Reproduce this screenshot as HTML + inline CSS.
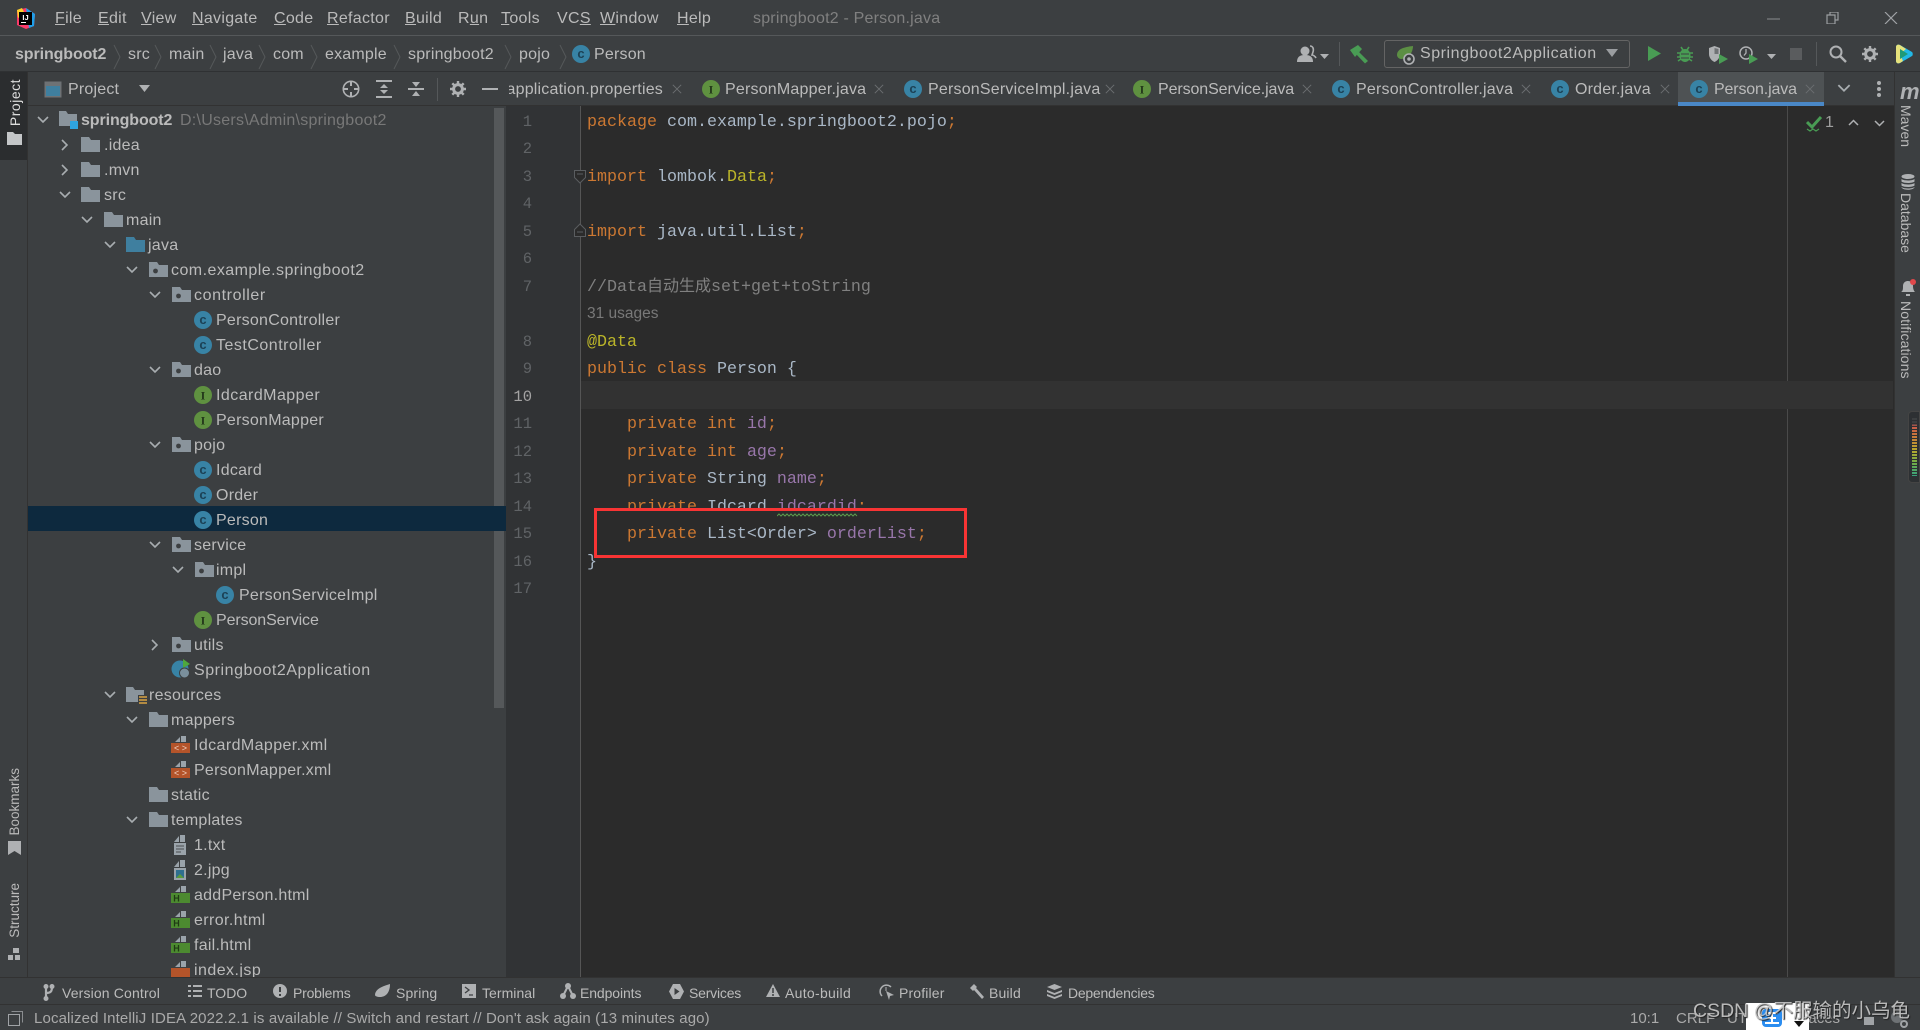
<!DOCTYPE html>
<html><head><meta charset="utf-8"><title>springboot2 - Person.java</title>
<style>
html,body{margin:0;padding:0;width:1920px;height:1030px;overflow:hidden;background:#3c3f41}
body{position:relative;font-family:"Liberation Sans","Noto Sans CJK SC",sans-serif;font-size:16px;color:#bbb}
div,svg,span.a{position:absolute}
.m{top:7px;line-height:24px;letter-spacing:.3px;white-space:nowrap;color:#bbb}
.n{top:43px;line-height:24px;letter-spacing:.2px;white-space:nowrap;color:#bbb}
.tb{top:78px;line-height:24px;letter-spacing:.2px;white-space:nowrap;color:#bbb}
.r{height:25px;line-height:27px;letter-spacing:.25px;white-space:nowrap;color:#bbb}
.g{position:absolute;width:40px;text-align:right;left:492px;height:27px;line-height:27px;font-family:"Liberation Mono",monospace;font-size:15.5px;color:#606366}
.c{position:absolute;left:587px;height:27px;line-height:27px;font-family:"Liberation Mono","Noto Sans CJK SC",monospace;font-size:16.67px;color:#a9b7c6;white-space:pre}
.k{color:#cc7832}.f{color:#9876aa}.y{color:#bbb529}
.bt{top:982px;line-height:22px;font-size:14px;letter-spacing:.15px;white-space:nowrap;color:#bbb}
.st{top:1007px;line-height:24px;font-size:15px;white-space:nowrap;color:#aaa}
.v{writing-mode:vertical-rl;white-space:nowrap;font-size:14px;line-height:20px;color:#bbb}
.vl{transform:rotate(180deg)}
</style></head><body>
<svg width="0" height="0" style="left:0;top:0">
<defs>
<symbol id="fd" viewBox="0 0 19 17"><path d="M0 1h8l2 3h9v12H0z" fill="#8a949c"/></symbol>
<symbol id="pk" viewBox="0 0 19 17"><path d="M0 1h8l2 3h9v12H0z" fill="#8a949c"/><circle cx="6.500" cy="10" r="2.400" fill="#3c3f41"/></symbol>
<symbol id="bf" viewBox="0 0 19 17"><path d="M0 1h8l2 3h9v12H0z" fill="#3f7f9f"/></symbol>
<symbol id="cc" viewBox="0 0 18 18"><circle cx="9" cy="9" r="9" fill="#3883a5"/><text x="9" y="13" font-family="Liberation Sans" font-size="13" font-weight="bold" text-anchor="middle" fill="#1c4256">c</text></symbol>
<symbol id="ii" viewBox="0 0 18 18"><circle cx="9" cy="9" r="9" fill="#5f9140"/><text x="9" y="13.500" font-family="Liberation Serif" font-size="12" font-weight="bold" text-anchor="middle" fill="#23381a">I</text></symbol>
<symbol id="xml" viewBox="0 0 19 18"><path d="M4 7l5-5v5zM10 1h5v6h-5z" fill="#9aa3aa"/><rect y="8" width="19" height="10" fill="#b4542a"/><text x="9.500" y="16" font-family="Liberation Sans" font-size="9" text-anchor="middle" fill="#f0d0c0">&lt; &gt;</text></symbol>
<symbol id="htm" viewBox="0 0 19 18"><path d="M4 7l5-5v5zM10 1h5v6h-5z" fill="#9aa3aa"/><rect y="8" width="19" height="10" fill="#4c8a30"/><text x="5.500" y="16.500" font-family="Liberation Sans" font-size="9" font-weight="bold" text-anchor="middle" fill="#1f3a14">H</text></symbol>
<symbol id="jsp" viewBox="0 0 19 18"><path d="M4 7l5-5v5zM10 1h5v6h-5z" fill="#9aa3aa"/><rect y="8" width="19" height="10" fill="#b4542a"/></symbol>
<symbol id="txt" viewBox="0 0 19 20"><path d="M2 7l5-6v6zM8 0h5v7H8zM2 8h12v12H2z" fill="#9aa3aa"/><path d="M4 11h8M4 14h8M4 17h5" stroke="#4a4d50" stroke-width="1"/></symbol>
<symbol id="jpg" viewBox="0 0 19 20"><path d="M2 7l5-6v6zM8 0h5v7H8zM2 8h12v12H2z" fill="#9aa3aa"/><rect x="4" y="10" width="8" height="8" fill="#2f6f8f"/><path d="M4 18l4-4 4 4z" fill="#5c9a3c"/></symbol>
<symbol id="dn" viewBox="0 0 12 8"><path d="M1 1l5 5 5-5" fill="none" stroke="#a8adb0" stroke-width="1.600"/></symbol>
<symbol id="rt" viewBox="0 0 8 12"><path d="M1 1l5 5-5 5" fill="none" stroke="#a8adb0" stroke-width="1.600"/></symbol>
<symbol id="sp" viewBox="0 0 8 26"><path d="M1 1l6 12-6 12" fill="none" stroke="#55585a" stroke-width="1"/></symbol>
<symbol id="xx" viewBox="0 0 12 12"><path d="M1 1l10 10M11 1L1 11" stroke="#6a6d70" stroke-width="1.200"/></symbol>
<symbol id="gear" viewBox="0 0 16 16"><circle cx="8" cy="8" r="4.400" fill="none" stroke="#afb1b3" stroke-width="3"/><path d="M8 0v3M8 13v3M0 8h3M13 8h3M2.300 2.300l2.200 2.200M11.500 11.500l2.200 2.200M13.700 2.300l-2.200 2.200M4.500 11.500l-2.200 2.200" stroke="#afb1b3" stroke-width="2.400"/></symbol>
</defs></svg>

<!-- menu bar -->
<div style="left:0;top:35px;width:1920px;height:1px;background:#55585a"></div>
<svg style="left:15px;top:8px" width="21" height="21" viewBox="0 0 21 21"><path d="M2 2l9-2 9 6-1 12-8 3-9-4z" fill="#fc3a6a"/><path d="M11 0l9 6-1 12-5 2z" fill="#1f9fe8"/><path d="M2 2l5-2 3 6-7 4z" fill="#fcd02a"/><rect x="4" y="4" width="13" height="13" fill="#000"/><text x="10.500" y="12" font-family="Liberation Sans" font-size="7.500" font-weight="bold" text-anchor="middle" fill="#fff">IJ</text><rect x="6" y="14" width="5" height="1" fill="#fff"/></svg>
<div class="m" style="left:55px"><u>F</u>ile</div>
<div class="m" style="left:98px"><u>E</u>dit</div>
<div class="m" style="left:141px"><u>V</u>iew</div>
<div class="m" style="left:192px"><u>N</u>avigate</div>
<div class="m" style="left:274px"><u>C</u>ode</div>
<div class="m" style="left:327px"><u>R</u>efactor</div>
<div class="m" style="left:405px"><u>B</u>uild</div>
<div class="m" style="left:458px">R<u>u</u>n</div>
<div class="m" style="left:501px"><u>T</u>ools</div>
<div class="m" style="left:557px">VC<u>S</u></div>
<div class="m" style="left:600px"><u>W</u>indow</div>
<div class="m" style="left:677px"><u>H</u>elp</div>
<div class="m" style="left:753px;color:#808080;letter-spacing:.2px">springboot2 - Person.java</div>
<svg style="left:1767px;top:12px" width="140" height="12" viewBox="0 0 140 12"><path d="M0 7h13" stroke="#8a8d90"/><path d="M60 3h8v9h-8zM63 3V0h8v8h-3" fill="none" stroke="#9a9da0" stroke-width="1.200"/><path d="M118 0l12 12M130 0l-12 12" stroke="#a0a3a6" stroke-width="1.200"/></svg>

<!-- nav bar -->
<div style="left:0;top:71px;width:1920px;height:1px;background:#2f3133"></div>
<div class="n" style="left:15px;font-weight:bold;letter-spacing:-.1px">springboot2</div>
<svg style="left:113px;top:44px" width="8" height="26"><use href="#sp"/></svg>
<div class="n" style="left:128px">src</div>
<svg style="left:154px;top:44px" width="8" height="26"><use href="#sp"/></svg>
<div class="n" style="left:169px">main</div>
<svg style="left:209px;top:44px" width="8" height="26"><use href="#sp"/></svg>
<div class="n" style="left:223px">java</div>
<svg style="left:258px;top:44px" width="8" height="26"><use href="#sp"/></svg>
<div class="n" style="left:273px">com</div>
<svg style="left:310px;top:44px" width="8" height="26"><use href="#sp"/></svg>
<div class="n" style="left:325px">example</div>
<svg style="left:393px;top:44px" width="8" height="26"><use href="#sp"/></svg>
<div class="n" style="left:408px">springboot2</div>
<svg style="left:504px;top:44px" width="8" height="26"><use href="#sp"/></svg>
<div class="n" style="left:519px">pojo</div>
<svg style="left:559px;top:44px" width="8" height="26"><use href="#sp"/></svg>
<svg style="left:572px;top:45px" width="18" height="18"><use href="#cc"/></svg>
<div class="n" style="left:594px">Person</div>

<!-- toolbar right -->
<svg style="left:1297px;top:45px" width="40" height="18" viewBox="0 0 40 18"><circle cx="8" cy="6" r="4.500" fill="#afb1b3"/><path d="M0 17c0-6 4-7 8-7s8 1 8 7z" fill="#afb1b3"/><path d="M13 1c3 0 4 3 3 6l-1 3c1 0 3 1 4 3" fill="none" stroke="#afb1b3" stroke-width="1.600"/><path d="M23 9h9l-4.500 5z" fill="#afb1b3"/></svg>
<div style="left:1339px;top:42px;width:1px;height:24px;background:#55585a"></div>
<svg style="left:1349px;top:44px" width="20" height="20" viewBox="0 0 20 20"><path d="M1 6l8-5 4 4-7 8z" fill="#499c54"/><path d="M9 7l10 10-3 2.500L7 10z" fill="#499c54"/></svg>
<div style="left:1384px;top:40px;width:244px;height:26px;border:1px solid #646464;border-radius:3px"></div>
<svg style="left:1396px;top:45px" width="20" height="20" viewBox="0 0 20 20"><path d="M1 10C1 4 8 2 17 1c0 6-4 13-12 13-2 0-4-2-4-4z" fill="#5c8f44"/><circle cx="13" cy="14" r="5" fill="#3c3f41" stroke="#afb1b3" stroke-width="1.600"/><circle cx="13" cy="14" r="1.800" fill="#afb1b3"/></svg>
<div class="n" style="left:1420px;top:42px;letter-spacing:.55px">Springboot2Application</div>
<svg style="left:1606px;top:49px" width="12" height="9"><path d="M0 0h12l-6 8z" fill="#9a9da0"/></svg>
<svg style="left:1648px;top:46px" width="13" height="15"><path d="M0 0l13 7.500L0 15z" fill="#499c54"/></svg>
<svg style="left:1677px;top:46px" width="16" height="16" viewBox="0 0 16 16"><ellipse cx="8" cy="9.500" rx="5.500" ry="6.500" fill="#499c54"/><path d="M4 1l2 3M12 1l-2 3M0 7h16M0 11h16M1 15l3-2M15 15l-3-2" stroke="#499c54" stroke-width="1.600"/><path d="M4 8h8M4 12h8" stroke="#3c3f41"/></svg>
<svg style="left:1709px;top:46px" width="20" height="18" viewBox="0 0 20 18"><path d="M0 2l5.500-2L11 2v6c0 4-3 7-5.500 8C3 15 0 12 0 8z" fill="#afb1b3"/><path d="M5.500 2l4 1v5H5.500z" fill="#3c3f41" opacity=".55"/><path d="M10 8l9 5-9 5z" fill="#499c54"/></svg>
<svg style="left:1739px;top:46px" width="20" height="18" viewBox="0 0 20 18"><circle cx="7" cy="7" r="6" fill="none" stroke="#afb1b3" stroke-width="1.500"/><path d="M7 3v4l-2 2.500" stroke="#afb1b3" fill="none" stroke-width="1.300"/><path d="M10 8l9 5-9 5z" fill="#499c54"/></svg>
<svg style="left:1767px;top:54px" width="9" height="6"><path d="M0 0h9L4.500 5z" fill="#afb1b3"/></svg>
<div style="left:1790px;top:48px;width:12px;height:12px;background:#5a5c5e"></div>
<div style="left:1816px;top:42px;width:1px;height:24px;background:#55585a"></div>
<svg style="left:1829px;top:45px" width="18" height="18" viewBox="0 0 18 18"><circle cx="7" cy="7" r="5.500" fill="none" stroke="#afb1b3" stroke-width="2"/><path d="M11 11l6 6" stroke="#afb1b3" stroke-width="2.400"/></svg>
<svg style="left:1862px;top:46px" width="16" height="16"><use href="#gear"/></svg>
<svg style="left:1895px;top:44px" width="18" height="20" viewBox="0 0 18 20"><path d="M1 3c0-2 2-3 4-2l12 7c1 1 1 3 0 4L5 19c-2 1-4 0-4-2z" fill="#22b8e6"/><path d="M1 3c0-2 2-3 4-2l6 4-6 5 3 7-3 2c-2 1-4 0-4-2z" fill="#e6e27c"/><path d="M5 5l8 5-8 5z" fill="#1f9a78"/></svg>

<!-- left strip -->
<div style="left:27px;top:72px;width:1px;height:905px;background:#323232"></div>
<div style="left:0;top:72px;width:27px;height:88px;background:#2b2d2f"></div>
<div class="v vl" style="left:5px;top:79px;color:#ddd;font-size:14px;letter-spacing:.5px">Project</div>
<svg style="left:7px;top:132px" width="15" height="13"><path d="M0 0h6l2 2h7v11H0z" fill="#c4c6c8"/></svg>
<div class="v vl" style="left:5px;top:768px;font-size:13.5px">Bookmarks</div>
<svg style="left:8px;top:841px" width="13" height="14"><path d="M0 0h13v14l-6.500-4L0 14z" fill="#afb1b3"/></svg>
<div class="v vl" style="left:5px;top:883px;font-size:13.5px">Structure</div>
<svg style="left:8px;top:948px" width="13" height="13"><path d="M5 0h6v5H5zM0 7h5v5H0zM7 7h5v5H7z" fill="#afb1b3"/></svg>

<!-- project header -->
<div style="left:28px;top:105px;width:478px;height:1px;background:#323232"></div>
<svg style="left:44px;top:81px" width="18" height="17"><rect x=".5" y=".5" width="17" height="16" fill="#6e7275"/><rect x="2" y="5" width="14" height="10" fill="#3f7f9f"/></svg>
<div class="tb" style="left:68px">Project</div>
<svg style="left:139px;top:85px" width="11" height="8"><path d="M0 0h11l-5.500 7z" fill="#afb1b3"/></svg>
<svg style="left:342px;top:80px" width="18" height="18" viewBox="0 0 18 18"><circle cx="9" cy="9" r="7.700" fill="none" stroke="#afb1b3" stroke-width="1.600"/><path d="M9 1v5M9 12v5M1 9h5M12 9h5" stroke="#afb1b3" stroke-width="2"/></svg>
<svg style="left:376px;top:80px" width="16" height="18" viewBox="0 0 16 18"><path d="M0 1h16M0 17h16" stroke="#afb1b3" stroke-width="2"/><path d="M8 4l4 4H4zM8 14l-4-4h8z" fill="#afb1b3"/></svg>
<svg style="left:408px;top:80px" width="16" height="18" viewBox="0 0 16 18"><path d="M0 9h16" stroke="#afb1b3" stroke-width="2"/><path d="M8 7L4 2h8zM8 11l4 5H4z" fill="#afb1b3"/></svg>
<div style="left:437px;top:78px;width:1px;height:23px;background:#55585a"></div>
<svg style="left:450px;top:81px" width="16" height="16"><use href="#gear"/></svg>
<div style="left:482px;top:88px;width:16px;height:2px;background:#afb1b3"></div>

<!-- tree -->
<div style="left:494px;top:108px;width:10px;height:600px;background:#55585a"></div>
<div style="left:28px;top:506px;width:478px;height:25px;background:#0d293e"></div>
<div style="left:28px;top:106px;width:478px;height:871px;overflow:hidden">
<svg style="left:9px;top:10px" width="12" height="8"><use href="#dn"/></svg>
<svg style="left:31px;top:4px" width="20" height="20" viewBox="0 0 20 20"><path d="M0 1h7l2 3h9v12H0z" fill="#8a949c"/><rect x="11" y="11" width="8" height="8" fill="#2fa4e0"/></svg>
<div class="r" style="left:53px;top:1px;font-weight:bold;letter-spacing:-.1px">springboot2</div>
<div class="r" style="left:152px;top:1px;color:#787878">D:\Users\Admin\springboot2</div>

<svg style="left:33px;top:33px" width="8" height="12"><use href="#rt"/></svg>
<svg style="left:53px;top:30px" width="19" height="17"><use href="#fd"/></svg>
<div class="r" style="left:76px;top:26px">.idea</div>
<svg style="left:33px;top:58px" width="8" height="12"><use href="#rt"/></svg>
<svg style="left:53px;top:55px" width="19" height="17"><use href="#fd"/></svg>
<div class="r" style="left:76px;top:51px">.mvn</div>
<svg style="left:31px;top:85px" width="12" height="8"><use href="#dn"/></svg>
<svg style="left:53px;top:80px" width="19" height="17"><use href="#fd"/></svg>
<div class="r" style="left:76px;top:76px">src</div>
<svg style="left:53px;top:110px" width="12" height="8"><use href="#dn"/></svg>
<svg style="left:76px;top:105px" width="19" height="17"><use href="#fd"/></svg>
<div class="r" style="left:98px;top:101px">main</div>
<svg style="left:76px;top:135px" width="12" height="8"><use href="#dn"/></svg>
<svg style="left:98px;top:130px" width="19" height="17"><use href="#bf"/></svg>
<div class="r" style="left:120px;top:126px">java</div>
<svg style="left:98px;top:160px" width="12" height="8"><use href="#dn"/></svg>
<svg style="left:121px;top:155px" width="19" height="17"><use href="#pk"/></svg>
<div class="r" style="left:143px;top:151px;letter-spacing:.45px">com.example.springboot2</div>
<svg style="left:121px;top:185px" width="12" height="8"><use href="#dn"/></svg>
<svg style="left:144px;top:180px" width="19" height="17"><use href="#pk"/></svg>
<div class="r" style="left:166px;top:176px;letter-spacing:.6px">controller</div>
<svg style="left:166px;top:205px" width="18" height="18"><use href="#cc"/></svg>
<div class="r" style="left:188px;top:201px">PersonController</div>
<svg style="left:166px;top:230px" width="18" height="18"><use href="#cc"/></svg>
<div class="r" style="left:188px;top:226px;letter-spacing:.5px">TestController</div>
<svg style="left:121px;top:260px" width="12" height="8"><use href="#dn"/></svg>
<svg style="left:144px;top:255px" width="19" height="17"><use href="#pk"/></svg>
<div class="r" style="left:166px;top:251px">dao</div>
<svg style="left:166px;top:280px" width="18" height="18"><use href="#ii"/></svg>
<div class="r" style="left:188px;top:276px;letter-spacing:.45px">IdcardMapper</div>
<svg style="left:166px;top:305px" width="18" height="18"><use href="#ii"/></svg>
<div class="r" style="left:188px;top:301px">PersonMapper</div>
<svg style="left:121px;top:335px" width="12" height="8"><use href="#dn"/></svg>
<svg style="left:144px;top:330px" width="19" height="17"><use href="#pk"/></svg>
<div class="r" style="left:166px;top:326px">pojo</div>
<svg style="left:166px;top:355px" width="18" height="18"><use href="#cc"/></svg>
<div class="r" style="left:188px;top:351px">Idcard</div>
<svg style="left:166px;top:380px" width="18" height="18"><use href="#cc"/></svg>
<div class="r" style="left:188px;top:376px">Order</div>
<svg style="left:166px;top:405px" width="18" height="18"><use href="#cc"/></svg>
<div class="r" style="left:188px;top:401px">Person</div>
<svg style="left:121px;top:435px" width="12" height="8"><use href="#dn"/></svg>
<svg style="left:144px;top:430px" width="19" height="17"><use href="#pk"/></svg>
<div class="r" style="left:166px;top:426px">service</div>
<svg style="left:144px;top:460px" width="12" height="8"><use href="#dn"/></svg>
<svg style="left:167px;top:455px" width="19" height="17"><use href="#pk"/></svg>
<div class="r" style="left:188px;top:451px">impl</div>
<svg style="left:188px;top:480px" width="18" height="18"><use href="#cc"/></svg>
<div class="r" style="left:211px;top:476px">PersonServiceImpl</div>
<svg style="left:166px;top:505px" width="18" height="18"><use href="#ii"/></svg>
<div class="r" style="left:188px;top:501px;letter-spacing:-.1px">PersonService</div>
<svg style="left:123px;top:533px" width="8" height="12"><use href="#rt"/></svg>
<svg style="left:144px;top:530px" width="19" height="17"><use href="#pk"/></svg>
<div class="r" style="left:166px;top:526px">utils</div>
<svg style="left:143px;top:553px" width="20" height="20" viewBox="0 0 20 20"><circle cx="9" cy="10" r="8.500" fill="#3883a5"/><path d="M12 0l7 5-7 4z" fill="#4fa83c"/><circle cx="13.500" cy="14" r="5" fill="#7a8f9c" stroke="#3c3f41"/></svg>
<div class="r" style="left:166px;top:551px;letter-spacing:.55px">Springboot2Application</div>
<svg style="left:76px;top:585px" width="12" height="8"><use href="#dn"/></svg>
<svg style="left:98px;top:580px" width="21" height="19" viewBox="0 0 21 19"><path d="M0 1h7l2 3h9v12H0z" fill="#8a949c"/><rect x="12" y="9" width="9" height="10" fill="#3c3f41"/><path d="M13 11h8M13 14h8M13 17h8" stroke="#d9a343" stroke-width="1.600"/></svg>
<div class="r" style="left:121px;top:576px">resources</div>
<svg style="left:98px;top:610px" width="12" height="8"><use href="#dn"/></svg>
<svg style="left:121px;top:605px" width="19" height="17"><use href="#fd"/></svg>
<div class="r" style="left:143px;top:601px">mappers</div>
<svg style="left:143px;top:629px" width="19" height="18"><use href="#xml"/></svg>
<div class="r" style="left:166px;top:626px;letter-spacing:.4px">IdcardMapper.xml</div>
<svg style="left:143px;top:654px" width="19" height="18"><use href="#xml"/></svg>
<div class="r" style="left:166px;top:651px">PersonMapper.xml</div>
<svg style="left:121px;top:680px" width="19" height="17"><use href="#fd"/></svg>
<div class="r" style="left:143px;top:676px">static</div>
<svg style="left:98px;top:710px" width="12" height="8"><use href="#dn"/></svg>
<svg style="left:121px;top:705px" width="19" height="17"><use href="#fd"/></svg>
<div class="r" style="left:143px;top:701px">templates</div>
<svg style="left:144px;top:729px" width="19" height="20"><use href="#txt"/></svg>
<div class="r" style="left:166px;top:726px">1.txt</div>
<svg style="left:144px;top:754px" width="19" height="20"><use href="#jpg"/></svg>
<div class="r" style="left:166px;top:751px">2.jpg</div>
<svg style="left:143px;top:779px" width="19" height="18"><use href="#htm"/></svg>
<div class="r" style="left:166px;top:776px">addPerson.html</div>
<svg style="left:143px;top:804px" width="19" height="18"><use href="#htm"/></svg>
<div class="r" style="left:166px;top:801px;letter-spacing:.4px">error.html</div>
<svg style="left:143px;top:829px" width="19" height="18"><use href="#htm"/></svg>
<div class="r" style="left:166px;top:826px">fail.html</div>
<svg style="left:143px;top:854px" width="19" height="18"><use href="#jsp"/></svg>
<div class="r" style="left:166px;top:851px;letter-spacing:.45px">index.jsp</div>
</div>

<!-- tabs -->
<div style="left:509px;top:72px;width:154px;height:34px;overflow:hidden">
<div class="tb" style="right:0;top:6px">application.properties</div>
</div>
<div style="left:506px;top:105px;width:1389px;height:1px;background:#323232"></div>
<svg style="left:672px;top:84px" width="10" height="10"><use href="#xx"/></svg>
<svg style="left:702px;top:80px" width="18" height="18"><use href="#ii"/></svg>
<div class="tb" style="left:725px">PersonMapper.java</div>
<svg style="left:874px;top:84px" width="10" height="10"><use href="#xx"/></svg>
<svg style="left:904px;top:80px" width="18" height="18"><use href="#cc"/></svg>
<div class="tb" style="left:928px">PersonServiceImpl.java</div>
<svg style="left:1105px;top:84px" width="10" height="10"><use href="#xx"/></svg>
<svg style="left:1133px;top:80px" width="18" height="18"><use href="#ii"/></svg>
<div class="tb" style="left:1158px;letter-spacing:-.1px">PersonService.java</div>
<svg style="left:1302px;top:84px" width="10" height="10"><use href="#xx"/></svg>
<svg style="left:1332px;top:80px" width="18" height="18"><use href="#cc"/></svg>
<div class="tb" style="left:1356px">PersonController.java</div>
<svg style="left:1521px;top:84px" width="10" height="10"><use href="#xx"/></svg>
<svg style="left:1551px;top:80px" width="18" height="18"><use href="#cc"/></svg>
<div class="tb" style="left:1575px">Order.java</div>
<svg style="left:1660px;top:84px" width="10" height="10"><use href="#xx"/></svg>
<div style="left:1678px;top:72px;width:146px;height:34px;background:#4e5254"></div>
<div style="left:1678px;top:102px;width:146px;height:4px;background:#4a88c7"></div>
<svg style="left:1690px;top:80px" width="18" height="18"><use href="#cc"/></svg>
<div class="tb" style="left:1714px;letter-spacing:-.15px">Person.java</div>
<svg style="left:1805px;top:84px" width="10" height="10"><use href="#xx"/></svg>
<svg style="left:1837px;top:84px" width="14" height="9"><use href="#dn"/></svg>
<svg style="left:1877px;top:81px" width="4" height="16"><circle cx="2" cy="2" r="2" fill="#afb1b3"/><circle cx="2" cy="8" r="2" fill="#afb1b3"/><circle cx="2" cy="14" r="2" fill="#afb1b3"/></svg>

<!-- editor -->
<div style="left:506px;top:106px;width:74px;height:871px;background:#313335"></div>
<div style="left:580px;top:106px;width:1315px;height:871px;background:#2b2b2b"></div>
<div style="left:580px;top:106px;width:1px;height:871px;background:#555"></div>
<div style="left:1787px;top:106px;width:1px;height:871px;background:#4a4a4a"></div>
<div style="left:581px;top:381px;width:1312px;height:28px;background:#323232"></div>

<div class="g" style="top:109px">1</div>
<div class="g" style="top:136px">2</div>
<div class="g" style="top:164px">3</div>
<div class="g" style="top:191px">4</div>
<div class="g" style="top:219px">5</div>
<div class="g" style="top:246px">6</div>
<div class="g" style="top:274px">7</div>
<div class="g" style="top:329px">8</div>
<div class="g" style="top:356px">9</div>
<div class="g" style="top:384px;color:#a4a3a3">10</div>
<div class="g" style="top:411px">11</div>
<div class="g" style="top:439px">12</div>
<div class="g" style="top:466px">13</div>
<div class="g" style="top:494px">14</div>
<div class="g" style="top:521px">15</div>
<div class="g" style="top:549px">16</div>
<div class="g" style="top:576px">17</div>

<svg style="left:574px;top:170px" width="12" height="14"><path d="M.5.500h11v7l-5.500 5.500-5.500-5.500zM3 4h6" fill="#2b2b2b" stroke="#5a5d60"/></svg>
<svg style="left:574px;top:223px" width="12" height="14"><path d="M.5 13.500h11v-7L6 1 .5 6.500zM3 9h6" fill="#2b2b2b" stroke="#5a5d60"/></svg>

<div class="c" style="top:109px"><span class="k">package</span> com.example.springboot2.pojo<span class="k">;</span></div>
<div class="c" style="top:164px"><span class="k">import</span> lombok.<span class="y">Data</span><span class="k">;</span></div>
<div class="c" style="top:219px"><span class="k">import</span> java.util.List<span class="k">;</span></div>
<div class="c" style="top:274px;color:#808080">//Data<span style="font-size:16px">自动生成</span>set+get+toString</div>
<div class="c" style="top:300px;font-family:'Liberation Sans',sans-serif;font-size:15.5px;color:#787878">31 usages</div>
<div class="c" style="top:329px;color:#bbb529">@Data</div>
<div class="c" style="top:356px"><span class="k">public class</span> Person {</div>
<div class="c" style="top:411px">    <span class="k">private int</span> <span class="f">id</span><span class="k">;</span></div>
<div class="c" style="top:439px">    <span class="k">private int</span> <span class="f">age</span><span class="k">;</span></div>
<div class="c" style="top:466px">    <span class="k">private</span> String <span class="f">name</span><span class="k">;</span></div>
<div class="c" style="top:494px">    <span class="k">private</span> Idcard <span class="f">idcardid</span><span class="k">;</span></div>
<div class="c" style="top:549px">}</div>

<!-- red box -->
<div style="left:594px;top:508px;width:367px;height:44px;border:3px solid #f83434;background:#2b2b2b"></div>
<svg style="left:777px;top:513px" width="81" height="4"><path d="M0 3l2-2 2 2 2-2 2 2 2-2 2 2 2-2 2 2 2-2 2 2 2-2 2 2 2-2 2 2 2-2 2 2 2-2 2 2 2-2 2 2 2-2 2 2 2-2 2 2 2-2 2 2 2-2 2 2 2-2 2 2 2-2 2 2 2-2 2 2 2-2 2 2 2-2 2 2 2-2 2 2" fill="none" stroke="#5b9a4c"/></svg>
<div class="c" style="top:521px">    <span class="k">private</span> List&lt;Order&gt; <span class="f">orderList</span><span class="k">;</span></div>

<!-- inspection widget -->
<svg style="left:1806px;top:116px" width="18" height="16" viewBox="0 0 18 16"><path d="M1 6l5 5 9-10" fill="none" stroke="#499c54" stroke-width="3"/><path d="M1 13l3 2 3-2 3 2 3-2" fill="none" stroke="#499c54" stroke-width="1.200"/></svg>
<div style="left:1825px;top:111px;line-height:24px;font-size:16px;color:#a0a0a0">1</div>
<svg style="left:1848px;top:119px" width="11" height="7"><path d="M1 6l4.500-4.500L10 6" fill="none" stroke="#afb1b3" stroke-width="1.500"/></svg>
<svg style="left:1874px;top:120px" width="11" height="7"><path d="M1 1l4.500 4.500L10 1" fill="none" stroke="#afb1b3" stroke-width="1.500"/></svg>

<!-- right strip -->
<div style="left:1894px;top:72px;width:1px;height:905px;background:#323232"></div>
<div style="left:1900px;top:80px;font:italic bold 22px/24px 'Liberation Sans',sans-serif;color:#afb1b3">m</div>
<div class="v" style="left:1896px;top:105px">Maven</div>
<svg style="left:1901px;top:174px" width="14" height="16" viewBox="0 0 14 16"><ellipse cx="7" cy="2.500" rx="6.500" ry="2.500" fill="#afb1b3"/><path d="M.5 5c2 2 11 2 13 0v2.500c-2 2-11 2-13 0zM.5 9c2 2 11 2 13 0v2.500c-2 2-11 2-13 0zM.5 13c2 2 11 2 13 0v.5c-2 3-11 3-13 0z" fill="#afb1b3"/></svg>
<div class="v" style="left:1896px;top:193px">Database</div>
<svg style="left:1901px;top:279px" width="16" height="18" viewBox="0 0 16 18"><path d="M0 13c2-1 2-3 2-6s2-5 5-5 5 2 5 5 1 5 2 6z" fill="#afb1b3"/><rect x="5" y="15" width="4" height="2" fill="#afb1b3"/><circle cx="12" cy="3" r="3" fill="#e0484a"/></svg>
<div class="v" style="left:1896px;top:301px;letter-spacing:.1px">Notifications</div>
<div style="left:1908px;top:411px;width:12px;height:72px;background:#2d3033;border:1px solid #444;border-radius:4px 0 0 4px;box-sizing:border-box"></div>
<div style="left:1912px;top:418px;width:5px;height:58px;background:linear-gradient(#3c3f41 0,#3c3f41 10%,#c95a4a 14%,#c9763c 30%,#b8a82e 55%,#6fae48 78%,#36a07e 100%)"></div>
<div style="left:1912px;top:418px;width:5px;height:58px;background:repeating-linear-gradient(transparent 0,transparent 2px,#2d3033 2px,#2d3033 3px)"></div>

<!-- bottom tool strip -->
<div style="left:0;top:977px;width:1920px;height:1px;background:#323232"></div>
<div style="left:0;top:1004px;width:1920px;height:1px;background:#323232"></div>
<svg style="left:43px;top:984px" width="12" height="17" viewBox="0 0 12 17"><path d="M3 2v13M3 9c5 0 6-2 6-6" fill="none" stroke="#afb1b3" stroke-width="2.200"/><circle cx="3" cy="2.500" r="2.500" fill="#afb1b3"/><circle cx="3" cy="14.500" r="2.500" fill="#afb1b3"/><circle cx="9" cy="2.500" r="2.500" fill="#afb1b3"/></svg>
<div class="bt" style="left:62px">Version Control</div>
<svg style="left:188px;top:985px" width="14" height="12"><path d="M0 1h3M5 1h9M0 6h3M5 6h9M0 11h3M5 11h9" stroke="#afb1b3" stroke-width="2"/></svg>
<div class="bt" style="left:207px;letter-spacing:0">TODO</div>
<svg style="left:273px;top:984px" width="14" height="14"><circle cx="7" cy="7" r="7" fill="#afb1b3"/><path d="M7 3v5M7 10v2" stroke="#3c3f41" stroke-width="2"/></svg>
<div class="bt" style="left:293px;letter-spacing:-.2px">Problems</div>
<svg style="left:375px;top:984px" width="16" height="14"><path d="M0 11C0 5 8 2 15 0c0 7-3 13-10 13-3 0-5-1-5-2z" fill="#afb1b3"/></svg>
<div class="bt" style="left:396px">Spring</div>
<svg style="left:462px;top:984px" width="14" height="14"><rect width="14" height="14" fill="#afb1b3"/><path d="M3 3l4 3-4 3M7 11h4" fill="none" stroke="#3c3f41" stroke-width="1.300"/></svg>
<div class="bt" style="left:482px;letter-spacing:.05px">Terminal</div>
<svg style="left:560px;top:983px" width="16" height="16"><circle cx="8" cy="3" r="3" fill="#afb1b3"/><circle cx="3" cy="13" r="3" fill="#afb1b3"/><circle cx="13" cy="13" r="3" fill="#afb1b3"/><path d="M8 3L3 13M8 3l5 10" stroke="#afb1b3" stroke-width="2"/></svg>
<div class="bt" style="left:580px;letter-spacing:-.1px">Endpoints</div>
<svg style="left:669px;top:984px" width="15" height="15"><path d="M4 0h7l4 7.500-4 7.500H4L0 7.500z" fill="#afb1b3"/><path d="M5.500 4l5 3.500-5 3.500z" fill="#3c3f41"/></svg>
<div class="bt" style="left:689px;letter-spacing:-.2px">Services</div>
<svg style="left:766px;top:984px" width="14" height="13"><path d="M7 0l7 13H0z" fill="#afb1b3"/><path d="M7 4v5M7 10v2" stroke="#3c3f41" stroke-width="1.500"/></svg>
<div class="bt" style="left:785px;letter-spacing:.3px">Auto-build</div>
<svg style="left:879px;top:984px" width="16" height="16" viewBox="0 0 16 16"><path d="M12 3A6 6 0 1 0 3 12" fill="none" stroke="#afb1b3" stroke-width="1.500"/><path d="M7 3v4" stroke="#afb1b3"/><path d="M7 7l8 4-4 1-1 4z" fill="#afb1b3"/></svg>
<div class="bt" style="left:899px">Profiler</div>
<svg style="left:969px;top:984px" width="15" height="15"><path d="M1 4l4-4 3 3-4 4zM7 4l8 9-2 2-8-9z" fill="#afb1b3"/></svg>
<div class="bt" style="left:989px">Build</div>
<svg style="left:1047px;top:984px" width="15" height="15"><path d="M7.500 0l7.500 3-7.500 3L0 3zM0 6l7.500 3L15 6v2l-7.500 3L0 8zM0 10l7.500 3 7.500-3v2l-7.500 3L0 12z" fill="#afb1b3"/></svg>
<div class="bt" style="left:1068px;letter-spacing:-.25px">Dependencies</div>

<!-- status bar -->
<svg style="left:8px;top:1011px" width="15" height="15"><path d="M3.500.500h11v11" fill="none" stroke="#8a8d90"/><rect x=".5" y="3.500" width="11" height="11" fill="none" stroke="#a0a3a6"/></svg>
<div class="st" style="left:34px;letter-spacing:.13px">Localized IntelliJ IDEA 2022.2.1 is available // Switch and restart // Don't ask again (13 minutes ago)</div>
<div class="st" style="left:1630px">10:1</div>
<div class="st" style="left:1676px">CRLF</div>
<div class="st" style="left:1727px">UTF-8</div>
<div class="st" style="left:1780px">4 spaces</div>
<div style="left:1864px;top:1017px;width:10px;height:8px;background:#a0a3a6"></div>
<svg style="left:1890px;top:1010px" width="20" height="20"><circle cx="7" cy="7" r="6" fill="#6e7275"/><circle cx="14" cy="14" r="3" fill="none" stroke="#a0a3a6" stroke-width="2"/></svg>
<div style="left:1746px;top:1003px;width:63px;height:27px;background:#fff"></div>
<svg style="left:1762px;top:1009px" width="20" height="18" viewBox="0 0 20 18"><rect width="20" height="18" rx="4" fill="#2b8df0"/><path d="M4 4h12M6 9h8M3 14h14M10 4v10" stroke="#fff" stroke-width="2"/></svg>
<svg style="left:1794px;top:1021px" width="10" height="6"><path d="M0 0h10l-5 6z" fill="#111"/></svg>
<div style="left:1693px;top:999px;font-size:19.5px;line-height:24px;color:rgba(205,205,205,.88);text-shadow:1px 1px 1px #222;white-space:nowrap">CSDN @不服输的小乌龟</div>
</body></html>
